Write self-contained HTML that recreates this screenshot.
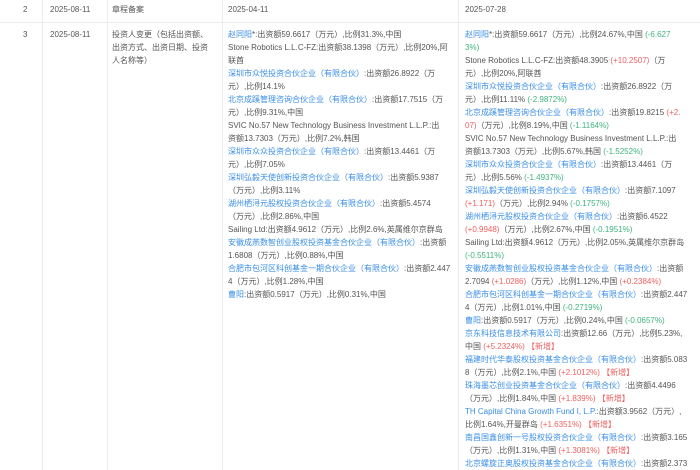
<!DOCTYPE html>
<html><head><meta charset="utf-8"><style>
body{margin:0;width:700px;height:470px;overflow:hidden;background:#fff;font-family:"Liberation Sans","Noto Sans CJK SC",sans-serif;font-size:8px;color:#555;position:relative}
.v{position:absolute;top:0;bottom:0;width:1px;background:#ececec}
.h{position:absolute;left:0;right:0;height:1px;background:#ececec}
.c{position:absolute;line-height:13px;white-space:nowrap}
a{color:#3a8ee6;text-decoration:none}
.g{color:#3fb37f}.r{color:#f06060}
</style></head><body>
<div class="v" style="left:42px"></div>
<div class="v" style="left:107px"></div>
<div class="v" style="left:222px"></div>
<div class="v" style="left:458px"></div>
<div class="h" style="top:22px"></div>

<div class="c" style="left:23px;top:3px">2</div>
<div class="c" style="left:50px;top:3px">2025-08-11</div>
<div class="c" style="left:112px;top:3px">章程备案</div>
<div class="c" style="left:228px;top:3px">2025-04-11</div>
<div class="c" style="left:465px;top:3px">2025-07-28</div>

<div class="c" style="left:23px;top:28px">3</div>
<div class="c" style="left:50px;top:28px">2025-08-11</div>
<div class="c" style="left:112px;top:28px">投资人变更（包括出资额、<br>出资方式、出资日期、投资<br>人名称等）</div>

<div class="c" style="left:228px;top:28px;width:228px;overflow:hidden">
<a>赵同阳</a>*:出资额59.6617（万元）,比例31.3%,中国<br>
Stone Robotics L.L.C-FZ:出资额38.1398（万元）,比例20%,阿<br>
联酋<br>
<a>深圳市众悦投资合伙企业（有限合伙）</a>:出资额26.8922（万<br>
元）,比例14.1%<br>
<a>北京成蹊管理咨询合伙企业（有限合伙）</a>:出资额17.7515（万<br>
元）,比例9.31%,中国<br>
SVIC No.57 New Technology Business Investment L.L.P.:出<br>
资额13.7303（万元）,比例7.2%,韩国<br>
<a>深圳市众众投资合伙企业（有限合伙）</a>:出资额13.4461（万<br>
元）,比例7.05%<br>
<a>深圳弘毅天使创新投资合伙企业（有限合伙）</a>:出资额5.9387<br>
（万元）,比例3.11%<br>
<a>湖州栖浔元股权投资合伙企业（有限合伙）</a>:出资额5.4574<br>
（万元）,比例2.86%,中国<br>
Sailing Ltd:出资额4.9612（万元）,比例2.6%,英属维尔京群岛<br>
<a>安徽成燕数智创业股权投资基金合伙企业（有限合伙）</a>:出资额<br>
1.6808（万元）,比例0.88%,中国<br>
<a>合肥市包河区科创基金一期合伙企业（有限合伙）</a>:出资额2.447<br>
4（万元）,比例1.28%,中国<br>
<a>曹阳</a>:出资额0.5917（万元）,比例0.31%,中国
</div>

<div class="c" style="left:465px;top:28px;width:235px;overflow:hidden">
<a>赵同阳</a>*:出资额59.6617（万元）,比例24.67%,中国 <span class="g">(-6.627</span><br>
<span class="g">3%)</span><br>
Stone Robotics L.L.C-FZ:出资额48.3905 <span class="r">(+10.2507)</span>（万<br>
元）,比例20%,阿联酋<br>
<a>深圳市众悦投资合伙企业（有限合伙）</a>:出资额26.8922（万<br>
元）,比例11.11% <span class="g">(-2.9872%)</span><br>
<a>北京成蹊管理咨询合伙企业（有限合伙）</a>:出资额19.8215 <span class="r">(+2.</span><br>
<span class="r">07)</span>（万元）,比例8.19%,中国 <span class="g">(-1.1164%)</span><br>
SVIC No.57 New Technology Business Investment L.L.P.:出<br>
资额13.7303（万元）,比例5.67%,韩国 <span class="g">(-1.5252%)</span><br>
<a>深圳市众众投资合伙企业（有限合伙）</a>:出资额13.4461（万<br>
元）,比例5.56% <span class="g">(-1.4937%)</span><br>
<a>深圳弘毅天使创新投资合伙企业（有限合伙）</a>:出资额7.1097<br>
<span class="r">(+1.171)</span>（万元）,比例2.94% <span class="g">(-0.1757%)</span><br>
<a>湖州栖浔元股权投资合伙企业（有限合伙）</a>:出资额6.4522<br>
<span class="r">(+0.9948)</span>（万元）,比例2.67%,中国 <span class="g">(-0.1951%)</span><br>
Sailing Ltd:出资额4.9612（万元）,比例2.05%,英属维尔京群岛<br>
<span class="g">(-0.5511%)</span><br>
<a>安徽成燕数智创业股权投资基金合伙企业（有限合伙）</a>:出资额<br>
2.7094 <span class="r">(+1.0286)</span>（万元）,比例1.12%,中国 <span class="r">(+0.2384%)</span><br>
<a>合肥市包河区科创基金一期合伙企业（有限合伙）</a>:出资额2.447<br>
4（万元）,比例1.01%,中国 <span class="g">(-0.2719%)</span><br>
<a>曹阳</a>:出资额0.5917（万元）,比例0.24%,中国 <span class="g">(-0.0657%)</span><br>
<a>京东科技信息技术有限公司</a>:出资额12.66（万元）,比例5.23%,<br>
中国 <span class="r">(+5.2324%) 【新增】</span><br>
<a>福建时代华泰股权投资基金合伙企业（有限合伙）</a>:出资额5.083<br>
8（万元）,比例2.1%,中国 <span class="r">(+2.1012%) 【新增】</span><br>
<a>珠海墨芯创业投资基金合伙企业（有限合伙）</a>:出资额4.4496<br>
（万元）,比例1.84%,中国 <span class="r">(+1.839%) 【新增】</span><br>
<a>TH Capital China Growth Fund I, L.P.</a>:出资额3.9562（万元）,<br>
比例1.64%,开曼群岛 <span class="r">(+1.6351%) 【新增】</span><br>
<a>南昌国鑫创新一号股权投资合伙企业（有限合伙）</a>:出资额3.165<br>
（万元）,比例1.31%,中国 <span class="r">(+1.3081%) 【新增】</span><br>
<a>北京螺旋正奥股权投资基金合伙企业（有限合伙）</a>:出资额2.373
</div>
</body></html>
